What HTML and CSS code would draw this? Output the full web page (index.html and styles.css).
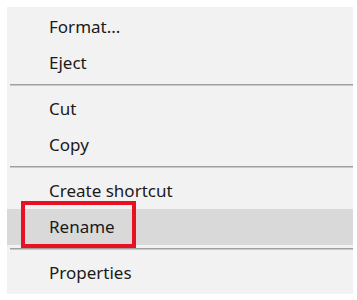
FILE: index.html
```html
<!DOCTYPE html>
<html lang="en">
<head>
  <meta charset="UTF-8" />
  <meta name="viewport" content="width=device-width, initial-scale=1.0" />
  <title>Context menu</title>
  <link rel="stylesheet" href="styles.css">
</head>
<body>
  <ul class="menu">
    <li class="item">Format...</li>
    <li class="item">Eject</li>
    <li class="sep"></li>
    <li class="item">Cut</li>
    <li class="item">Copy</li>
    <li class="sep"></li>
    <li class="item">Create shortcut</li>
    <li class="item hover marked">Rename</li>
    <li class="sep"></li>
    <li class="item">Properties</li>
  </ul>
</body>
</html>
```
FILE: styles.css
```css
/* Page */
body {
  margin: 0;
  padding: 7px;
  background: #ffffff;
  font-family: "Noto Sans", "Open Sans", sans-serif;
}

/* Menu panel */
.menu {
  list-style: none;
  margin: 0;
  padding: 2px 0 3px;
  width: 346px;
  background: #f2f2f2;
  box-sizing: border-box;
}

/* Menu rows */
.item {
  height: 36px;
  line-height: 36px;
  padding-left: 42px;
  font-size: 17px;
  color: #1a1a1a;
  position: relative;
}
.item.hover {
  background: #d9d9d9;
}

/* Red annotation box */
.marked::after {
  content: "";
  position: absolute;
  left: 14px;
  top: -8px;
  width: 107px;
  height: 39px;
  border: 4px solid #e81123;
}

/* Separators */
.sep {
  height: 1px;
  margin: 3px 0 5px 3px;
  border-top: 1px solid #a0a0a0;
  background: #c8c8c8;
}
```
